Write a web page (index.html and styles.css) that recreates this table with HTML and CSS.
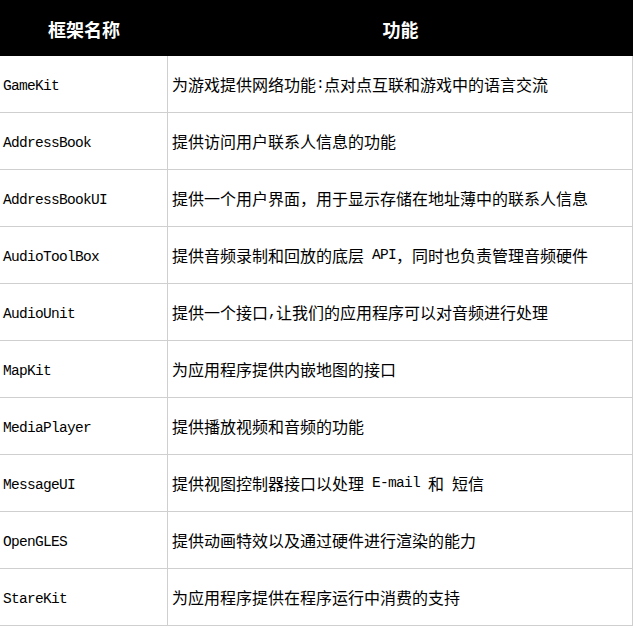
FILE: index.html
```html
<!DOCTYPE html>
<html lang="zh-CN">
<head>
<meta charset="utf-8">
<title>框架名称</title>
<link rel="stylesheet" href="styles.css">
</head>
<body>
<div class="table">
  <div class="th">框架名称</div>
  <div class="th">功能</div>

  <div class="td name">GameKit</div>
  <div class="td desc">为游戏提供网络功能<span class="en">:</span>点对点互联和游戏中的语言交流</div>

  <div class="td name">AddressBook</div>
  <div class="td desc">提供访问用户联系人信息的功能</div>

  <div class="td name">AddressBookUI</div>
  <div class="td desc">提供一个用户界面，用于显示存储在地址薄中的联系人信息</div>

  <div class="td name">AudioToolBox</div>
  <div class="td desc">提供音频录制和回放的底层<span class="en"> API</span>，同时也负责管理音频硬件</div>

  <div class="td name">AudioUnit</div>
  <div class="td desc">提供一个接口<span class="en">,</span>让我们的应用程序可以对音频进行处理</div>

  <div class="td name">MapKit</div>
  <div class="td desc">为应用程序提供内嵌地图的接口</div>

  <div class="td name">MediaPlayer</div>
  <div class="td desc">提供播放视频和音频的功能</div>

  <div class="td name">MessageUI</div>
  <div class="td desc">提供视图控制器接口以处理<span class="en"> E-mail </span>和<span class="en"> </span>短信</div>

  <div class="td name">OpenGLES</div>
  <div class="td desc">提供动画特效以及通过硬件进行渲染的能力</div>

  <div class="td name">StareKit</div>
  <div class="td desc">为应用程序提供在程序运行中消费的支持</div>
</div>
</body>
</html>
```

FILE: styles.css
```css
html, body {
  margin: 0;
  padding: 0;
  background: #ffffff;
}

.table {
  display: grid;
  grid-template-columns: 168px 465px;
  width: 633px;
  font-family: "Noto Sans CJK SC", sans-serif;
  color: #000;
}

.th {
  height: 56px;
  background: #000;
  color: #fff;
  font-weight: 700;
  font-size: 18px;
  display: flex;
  align-items: center;
  justify-content: center;
  padding-top: 1px;
  box-sizing: border-box;
}

.td {
  height: 57px;
  box-sizing: border-box;
  border-bottom: 1px solid #cfcfcf;
  border-right: 1px solid #cfcfcf;
  display: flex;
  align-items: center;
  font-size: 16px;
  white-space: pre;
}

.name {
  padding-left: 3px;
  padding-top: 3px;
  font-family: "Liberation Mono", monospace;
  font-size: 14.5px;
  letter-spacing: -0.7px;
}

.desc {
  padding-left: 4px;
}

.en {
  font-family: "Liberation Mono", monospace;
  font-size: 14.5px;
  letter-spacing: -0.7px;
}
```
